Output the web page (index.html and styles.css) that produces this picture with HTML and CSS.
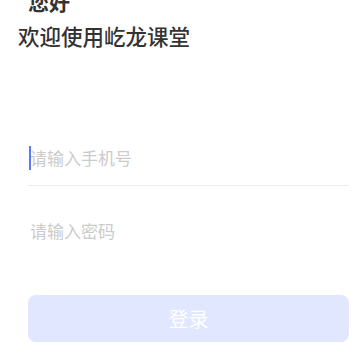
FILE: index.html
```html
<!DOCTYPE html>
<html lang="zh-CN">
<head>
    <meta charset="UTF-8">
    <title>登录</title>
    <link rel="stylesheet" href="styles.css">
</head>
<body>
<div class="login">
    <div class="head">
        <h2 class="hello">您好</h2>
        <h1 class="welcome">欢迎使用屹龙课堂</h1>
    </div>
    <form class="form">
        <div class="field field-line">
            <input class="field-input" type="tel" placeholder="请输入手机号">
            <span class="caret"></span>
        </div>
        <div class="field">
            <input class="field-input" type="password" placeholder="请输入密码">
        </div>
        <button class="btn-login" type="button" disabled>登录</button>
    </form>
</div>
</body>
</html>
```

FILE: styles.css
```css
/* 重置默认样式 */
* {
    margin: 0;
    padding: 0;
    border: none;
    outline: none;
    box-sizing: border-box;
}
body {
    background: #ffffff;
    font-family: "Noto Sans CJK SC", "Noto Sans", sans-serif;
}
.login {
    padding: 0 11px 0 28px;
}
.head {
    margin-top: -11px;
}
.hello {
    font-size: 21px;
    line-height: 24px;
    font-weight: bold;
    color: #333333;
}
.welcome {
    margin-left: -10px;
    margin-top: 11px;
    font-size: 21.5px;
    line-height: 24px;
    font-weight: 500;
    color: #333333;
}
.form {
    margin-top: 81px;
}
.field {
    position: relative;
    display: flex;
    align-items: center;
    height: 57px;
}
.field + .field {
    margin-top: 16px;
}
.field-line {
    border-bottom: 1px solid #ececec;
}
/* 输入光标 */
.caret {
    position: absolute;
    z-index: 2;
    left: 1px;
    top: 17px;
    width: 2px;
    height: 24px;
    background: #5c78ff;
}
.field-input {
    width: 100%;
    height: 24px;
    padding-left: 2px;
    font-family: inherit;
    font-size: 17px;
    color: #333333;
    background: transparent;
}
.field-input::placeholder {
    color: #cbcbcb;
}
.btn-login {
    display: block;
    width: 100%;
    height: 47px;
    margin-top: 36px;
    border-radius: 8px;
    background: #e1e7fe;
    color: #ffffff;
    font-family: inherit;
    font-size: 20px;
}
```
